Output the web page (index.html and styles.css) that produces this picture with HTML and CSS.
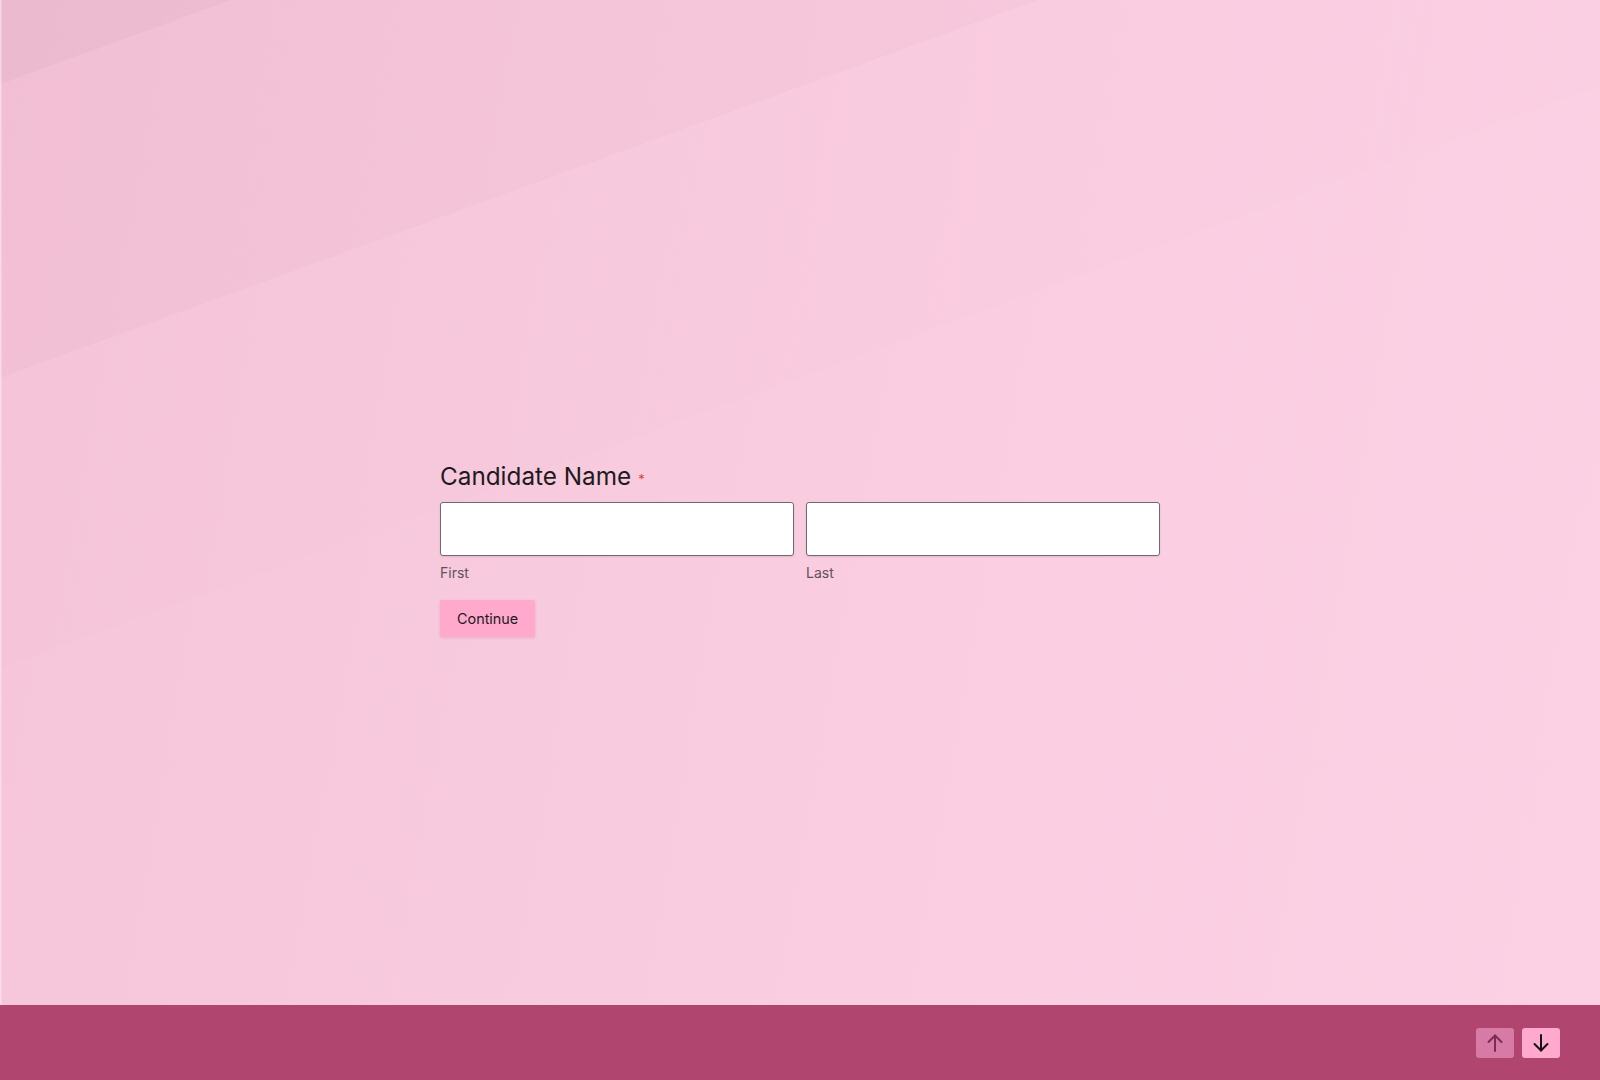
FILE: index.html
```html
<!DOCTYPE html>
<html lang="en">
<head>
<meta charset="utf-8">
<title>Candidate Name</title>
<link rel="stylesheet" href="styles.css">
</head>
<body>
<div class="page">
  <main class="stage">
    <form class="form">
      <h1 class="question">Candidate Name<span class="req">*</span></h1>
      <div class="fields">
        <div class="field">
          <input class="input" type="text" aria-label="First">
          <label class="sublabel">First</label>
        </div>
        <div class="field">
          <input class="input" type="text" aria-label="Last">
          <label class="sublabel">Last</label>
        </div>
      </div>
      <button type="button" class="continue">Continue</button>
    </form>
  </main>
  <footer class="footer">
    <button type="button" class="nav nav-up" aria-label="Previous">
      <svg width="16" height="18" viewBox="0 0 16 18" fill="none" stroke="currentColor" stroke-width="2" stroke-linecap="round" stroke-linejoin="round"><path d="M8 17V1.5"/><path d="M1.5 8L8 1.5L14.5 8"/></svg>
    </button>
    <button type="button" class="nav nav-down" aria-label="Next">
      <svg width="16" height="18" viewBox="0 0 16 18" fill="none" stroke="currentColor" stroke-width="2" stroke-linecap="round" stroke-linejoin="round"><path d="M8 1V16.5"/><path d="M1.5 10L8 16.5L14.5 10"/></svg>
    </button>
  </footer>
</div>
</body>
</html>
```

FILE: styles.css
```css
* { box-sizing: border-box; }

html, body {
  margin: 0;
  padding: 0;
  height: 100%;
}

body {
  font-family: Inter, "Noto Sans", "Liberation Sans", sans-serif;
  color: #1e1a1d;
  background-color: #f9cde0;
  background-image:
    linear-gradient(90deg, rgba(255,235,245,0.6) 0 1px, transparent 2px),
    linear-gradient(160deg,
      rgba(120,60,90,0.075) 0 79px,
      rgba(140,50,90,0.035) 79px 355px,
      rgba(140,50,90,0.006) 355px 628px,
      transparent 628px),
    linear-gradient(100deg, #f5c4d8 0%, #f8cadd 35%, #fbcee2 65%, #fcd1e4 100%);
  background-repeat: no-repeat;
}

.page {
  display: flex;
  flex-direction: column;
  height: 1080px;
}

.stage {
  flex: 1;
}

.form {
  width: 720px;
  margin: 0 auto;
  padding-top: 462px;
}

.question {
  margin: 0 0 7px;
  font-size: 24.3px;
  line-height: 29px;
  font-weight: 400;
  color: #1e1a1d;
  display: flex;
  align-items: baseline;
}

.req {
  color: #d9453a;
  font-size: 13px;
  margin-left: 7px;
  position: relative;
  top: -1px;
}

.fields {
  display: flex;
  gap: 12px;
}

.field {
  flex: 1;
  display: flex;
  flex-direction: column;
}

.input {
  display: block;
  width: 100%;
  height: 54px;
  margin: 0;
  background: #ffffff;
  border: 1px solid #6e6a74;
  border-radius: 3px;
  box-shadow: 0 1px 2px rgba(80, 30, 55, 0.12);
  font: inherit;
  outline: none;
}

.sublabel {
  margin-top: 8px;
  font-size: 14px;
  line-height: 17px;
  color: #5d5359;
}

.continue {
  margin-top: 19px;
  height: 37px;
  padding: 0 17px;
  background: #ffaacd;
  border: none;
  border-radius: 2px;
  box-shadow: 0 1px 3px rgba(150, 60, 100, 0.18);
  font-family: Inter, "Noto Sans", "Liberation Sans", sans-serif;
  font-size: 14.4px;
  color: #1e1a1d;
  cursor: pointer;
}

.footer {
  height: 75px;
  background: #b0466f;
  display: flex;
  justify-content: flex-end;
  align-items: center;
  gap: 8px;
  padding-right: 40px;
}

.nav {
  width: 38px;
  height: 30px;
  border: none;
  border-radius: 3px;
  padding: 0;
  display: flex;
  align-items: center;
  justify-content: center;
  cursor: pointer;
}

.nav-up {
  background: #d87aa6;
  color: #7a2d53;
}

.nav-down {
  background: #ffa9cf;
  color: #141214;
}
```
